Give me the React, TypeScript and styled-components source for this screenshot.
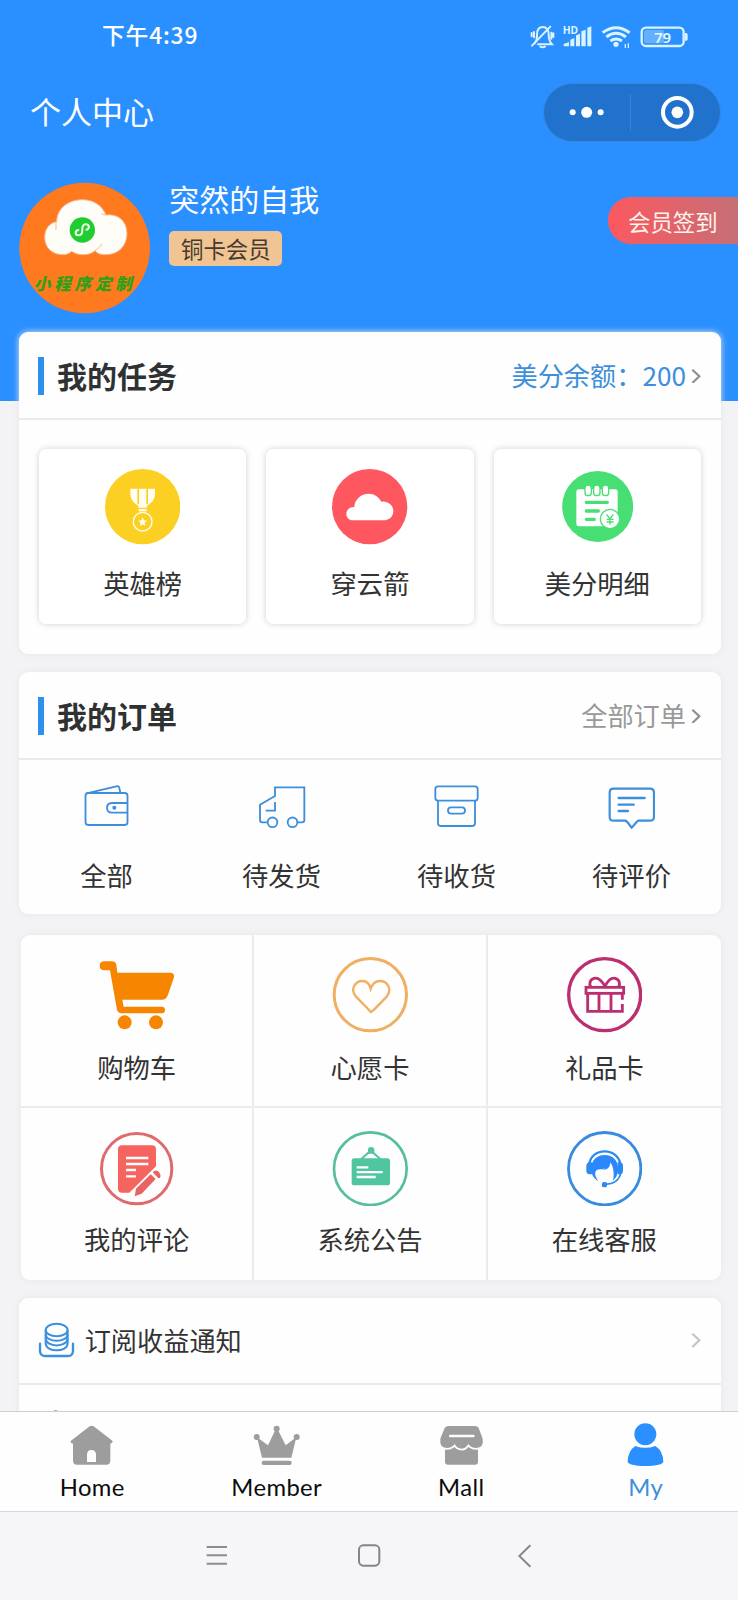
import React from "react";
import styled, { createGlobalStyle } from "styled-components";

const CJK = `"Noto Sans CJK SC", "Noto Sans", sans-serif`;

const GlobalStyle = createGlobalStyle`
  * { box-sizing: border-box; }
  body { margin: 0; background: #f3f3f5; font-family: ${CJK}; color: #333; }
`;

const Screen = styled.div`
  width: 738px;
  height: 1600px;
  display: flex;
  flex-direction: column;
  overflow: hidden;
  background: #f3f3f5;
`;

const Scroll = styled.main`
  height: 1411px;
  flex: none;
  overflow: hidden;
`;

const Header = styled.header`
  height: 401px;
  background: #2a8fff;
  color: #fff;
`;

const StatusBar = styled.div`
  height: 83px;
  padding: 24px 49px 0 102px;
  display: flex;
  justify-content: space-between;
  align-items: flex-start;
`;

const Clock = styled.span`
  margin-top: -1px;
  font-size: 22.8px;
  font-weight: 500;
  line-height: 24px;
  letter-spacing: 0.8px;
`;

const StatusIcons = styled.div`
  display: flex;
  align-items: center;
`;

const NavBar = styled.div`
  height: 58px;
  padding: 0 17px 0 30px;
  display: flex;
  justify-content: space-between;
  align-items: center;
`;

const PageTitle = styled.h1`
  margin: -3px 0 0;
  font-size: 31px;
  font-weight: 400;
  line-height: 40px;
`;

const Capsule = styled.div`
  width: 178px;
  height: 59px;
  border-radius: 30px;
  background: #2172cd;
  border: 1px solid #3b86d8;
  display: flex;
  align-items: center;
`;

const CapsuleHalf = styled.div`
  flex: 1;
  display: flex;
  justify-content: center;
  align-items: center;
  & + & {
    padding-left: 4px;
    border-left: 1px solid #3b84d6;
    height: 37px;
  }
`;

const Profile = styled.section`
  padding: 41px 0 0 19px;
  display: flex;
  align-items: flex-start;
`;

const Identity = styled.div`
  margin: -2px 0 0 19px;
  flex: 1;
  display: flex;
  flex-direction: column;
  align-items: flex-start;
`;

const Nickname = styled.div`
  font-size: 30px;
  line-height: 36px;
`;

const Level = styled.div`
  margin-top: 15px;
  width: 113px;
  height: 35px;
  border-radius: 5px;
  background: #f0c593;
  color: #453a30;
  font-size: 22.4px;
  line-height: 34px;
  text-align: center;
`;

const SignIn = styled.button`
  margin: 15px 0 0;
  padding: 0 0 0 20px;
  width: 130px;
  height: 47px;
  border: 0;
  border-radius: 23px 0 0 23px;
  background: linear-gradient(90deg, #fc585f, #c66f76);
  color: #fff3ec;
  font: 22.4px/46px ${CJK};
  text-align: left;
`;

const Cards = styled.div`
  margin-top: -69px;
  padding: 0 17px 0 19px;
`;

const Card = styled.section<{ $gap?: number; $inset?: number }>`
  margin-top: ${(p) => p.$gap ?? 0}px;
  margin-left: ${(p) => p.$inset ?? 0}px;
  border-radius: 9px;
  background: #fefefe;
  box-shadow: 0 0 6px #e6e5e8;
`;

const CardHead = styled.div`
  height: 88px;
  padding: 0 20px 0 19px;
  display: flex;
  align-items: center;
  border-bottom: 2px solid #ebe9eb;
`;

const Bar = styled.i`
  width: 6px;
  height: 38px;
  margin-top: 2px;
  background: #2f8fee;
`;

const CardTitle = styled.h2`
  margin: -1px auto 0 13px;
  font-size: 30px;
  font-weight: 700;
  line-height: 40px;
  color: #303133;
`;

const More = styled.span<{ $color: string }>`
  margin: 0 5px 0 0;
  font-size: 26.2px;
  line-height: 36px;
  color: ${(p) => p.$color};
`;

const Tiles = styled.div`
  height: 234px;
  padding: 29px 20px 0;
  display: grid;
  grid-template-columns: repeat(3, 1fr);
  gap: 20px;
`;

const Tile = styled.div`
  height: 175px;
  padding-top: 20px;
  border-radius: 7px;
  background: #fff;
  box-shadow: 0 0 6px #d2d2d4;
  display: flex;
  flex-direction: column;
  align-items: center;
`;

const IconSlot = styled.div<{ $h: number }>`
  height: ${(p) => p.$h}px;
  display: flex;
  align-items: center;
  justify-content: center;
`;

const Label = styled.div<{ $top: number }>`
  margin-top: ${(p) => p.$top}px;
  font-size: 26.3px;
  line-height: 36px;
  white-space: nowrap;
  color: #333;
`;

const Orders = styled.div`
  height: 154px;
  padding: 24px 2px 0 0;
  display: grid;
  grid-template-columns: repeat(4, 1fr);
`;

const Cell = styled.div`
  display: flex;
  flex-direction: column;
  align-items: center;
`;

const Services = styled.div`
  display: grid;
  grid-template-columns: repeat(3, 1fr);
`;

const Service = styled(Cell)<{ $first: boolean; $edge: boolean }>`
  height: ${(p) => (p.$first ? 173 : 172)}px;
  padding-top: ${(p) => (p.$first ? 22 : 22.5)}px;
  border-right: ${(p) => (p.$edge ? "0" : "2px solid #ececee")};
  border-bottom: ${(p) => (p.$first ? "2px solid #ececee" : "0")};
`;

const ListRow = styled.div`
  height: 87px;
  padding: 0 20px 2px 19px;
  display: flex;
  align-items: center;
  border-bottom: 2px solid #ececee;
`;

const RowLabel = styled.span`
  margin: 0 auto 0 10px;
  font-size: 26.2px;
  line-height: 36px;
`;

const RowPeek = styled.div`
  height: 60px;
  padding: 24px 0 0 31px;
`;

const TabBar = styled.nav`
  height: 101px;
  flex: none;
  display: grid;
  grid-template-columns: repeat(4, 1fr);
  background: #fefefe;
  border-top: 1px solid #cfcdd2;
  border-bottom: 1px solid #d9d7dc;
`;

const Tab = styled.div<{ $active?: boolean }>`
  padding-top: 10px;
  display: flex;
  flex-direction: column;
  align-items: center;
  font-family: Lato, "Open Sans", sans-serif;
  font-size: 23.8px;
  line-height: 30px;
  letter-spacing: 0.4px;
  color: ${(p) => (p.$active ? "#3d8edb" : "#0c0c0c")};
`;

const TabLabel = styled.span`
  margin-top: 5px;
`;

const SystemNav = styled.div`
  flex: 1;
  padding: 0 0 0 206px;
  display: flex;
  align-items: center;
  background: #f6f5f8;
`;

const NavGlyph = styled.div<{ $gap?: number }>`
  display: flex;
  margin-left: ${(p) => p.$gap ?? 0}px;
`;

type IconProps = {
  box: [number, number, number, number];
  children: React.ReactNode;
  gap?: number;
};

/* Artwork is drawn on a grid three times finer than the layout pixel. */
const Svg = styled.svg<{ $gap: number }>`
  display: block;
  flex: none;
  margin-left: ${(p) => p.$gap}px;
`;

const Icon = ({ box, children, gap = 0 }: IconProps) => (
  <Svg $gap={gap} width={box[2] / 3} height={box[3] / 3} viewBox={box.join(" ")} fill="none">
    {children}
  </Svg>
);

const Chevron = ({ color }: { color: string }) => (
  <Icon box={[968, 143, 30, 50]}>
    <path d="M972 151L993 171L972 191" stroke={color} strokeWidth="6.500" />
  </Icon>
);

const StatusGlyphs = () => (
  <StatusIcons>
    <Icon box={[482, 72, 76, 78]}>
      <g stroke="#d9f3ff" strokeWidth="6" strokeLinecap="round">
        <path d="M496 130C504 121 503 113 503 104C503 88 511 81 520 81C532 81 538 91 538 104C538 116 540 124 548 133H506" />
        <path d="M488 137L543 80" />
        <path d="M513 140q7 4 14 0M487 99v10M494 96v16M546 98v18M552 100v11" />
      </g>
    </Icon>
    <Icon box={[578, 72, 90, 78]} gap={6.3}>
      <g fill="#d9f3ff">
        <text x="580" y="101" fontSize="31" fontWeight="700" fontFamily="Noto Sans, sans-serif" textLength="46">HD</text>
        <path d="M583 132L599 126V139H583ZM603 119L615 114V139H603ZM620 106L632 101V139H620ZM636 94L649 89V139H636ZM654 83L666 79V139H654Z" />
      </g>
    </Icon>
    <Icon box={[696, 72, 92, 78]} gap={9.5}>
      <g stroke="#d9f3ff" strokeWidth="9">
        <path d="M701 98Q741 68 782 98M712 111Q741 88 771 111M724 123Q741 111 759 123" />
        <path d="M769 132v12M778 130v14" strokeWidth="4" />
      </g>
      <circle cx="741" cy="133" r="8" fill="#d9f3ff" />
    </Icon>
    <Icon box={[814, 72, 146, 78]} gap={8.7}>
      <rect x="826" y="90" width="60" height="40" rx="6" fill="#64b0ff" />
      <rect x="819" y="83" width="126" height="55" rx="13" stroke="#d9f3ff" strokeWidth="7" />
      <path d="M949 99h3q5 0 5 5v13q0 5-5 5h-3z" fill="#d9f3ff" />
      <text x="882" y="128" textAnchor="middle" fontSize="45" fontWeight="600" fontFamily="Noto Sans, sans-serif" textLength="51" fill="#e4f7ff">79</text>
    </Icon>
  </StatusIcons>
);

const Avatar = () => (
  <Icon box={[57, 546, 394, 396]}>
    <circle cx="254" cy="744" r="196" fill="#ff7a1e" />
    <path
      d="M185 764C150 762 134 738 134 712C134 685 150 668 170 665C170 625 205 599 247 599C285 599 308 620 318 645C352 640 381 662 381 700C381 738 355 764 318 764C302 765 292 760 285 752C270 768 232 768 215 754C208 761 198 765 185 764Z"
      fill="#fffdf8"
      stroke="#f7b287"
      strokeWidth="3"
    />
    <path d="M168 668V690M318 645L304 642M285 752Q300 742 306 732" stroke="#ef9a68" strokeWidth="2" />
    <circle cx="247" cy="690" r="38" fill="#1fcd30" />
    <path
      d="M235 690C223 693 225 706 236 706C245 706 247 699 247 691V686C247 677 252 672 259 673C269 675 269 686 259 689"
      stroke="#e9ffe6"
      strokeWidth="6"
      strokeLinecap="round"
    />
    <text
      x="101"
      y="869"
      fontSize="50"
      fontWeight="900"
      fontStyle="italic"
      fontFamily="Noto Sans CJK SC, sans-serif"
      textLength="294"
      fill="#2fa018"
    >
      小程序定制
    </text>
  </Icon>
);

const Medal = () => (
  <Icon box={[314, 446, 226, 226]}>
    <circle cx="427" cy="559" r="113" fill="#fbd023" />
    <path d="M390 505H464V522Q464 542 440 557V562H414V557Q390 542 390 522Z" fill="#fffdf2" />
    <path d="M413.500 505V552M440.500 505V552" stroke="#fbd023" strokeWidth="5" />
    <path d="M415 569.500H439" stroke="#fffdf2" strokeWidth="7" />
    <circle cx="427" cy="604" r="28" stroke="#fffdf2" strokeWidth="4" />
    <path d="M427 591l4 9 9 1-7 6 2 10-8-5-8 5 2-10-7-6 9-1z" fill="#fffdf2" />
  </Icon>
);

const Cloud = () => (
  <Icon box={[995, 446, 226, 226]}>
    <circle cx="1108" cy="559" r="113" fill="#ff575f" />
    <path
      d="M1058 600C1046 600 1038 591 1038 580C1038 569 1047 560 1062 560C1062 538 1082 520 1105 520C1122 520 1135 529 1143 544C1162 541 1179 554 1179 572C1179 588 1167 600 1150 600Z"
      fill="#fff"
    />
  </Icon>
);

const Bill = () => (
  <Icon box={[577, 453, 214, 214]}>
    <circle cx="684" cy="559.500" r="106.500" fill="#47df74" />
    <rect x="620" y="508" width="124" height="111" rx="7" fill="#fff" />
    {[656, 682, 708].map((x) => (
      <rect key={x} x={x - 10} y="495" width="19" height="32" rx="9" fill="#fff" stroke="#47df74" strokeWidth="4" />
    ))}
    <path d="M650 547H713M650 573H686M650 598H674" stroke="#47df74" strokeWidth="10" strokeLinecap="round" />
    <circle cx="721" cy="597" r="31" fill="#47df74" />
    <circle cx="721" cy="597" r="27" fill="#fff" />
    <path d="M711 583L721 597L731 583M721 597V614M711 598H732M711 606H732" stroke="#47df74" strokeWidth="4" />
  </Icon>
);

const LINE = "#3d8fdc";

const Wallet = () => (
  <Icon box={[252, 370, 136, 135]}>
    <g stroke={LINE} strokeWidth="5.500">
      <rect x="256.500" y="397" width="126" height="96" rx="8" />
      <path d="M260 398L349 377Q357 375 358 382L361 396M383 427H336Q321 428 321 441Q321 455 336 456H383" />
    </g>
    <circle cx="343" cy="441" r="6" fill={LINE} />
  </Icon>
);

const Truck = () => (
  <Icon box={[774, 370, 144, 135]}>
    <g stroke={LINE} strokeWidth="5.500">
      <path d="M802 485H787Q780 485 780 478V432L825 406V380H913V478Q913 485 906 485H893M825 424V450H797" />
      <circle cx="817.500" cy="485" r="14.500" />
      <circle cx="877.500" cy="485" r="14.500" />
    </g>
  </Icon>
);

const Parcel = () => (
  <Icon box={[194, 370, 138, 135]}>
    <g stroke={LINE} strokeWidth="5.500">
      <rect x="198" y="377" width="127" height="43" rx="8" />
      <path d="M206 420V488Q206 496 214 496H309Q317 496 317 488V420" />
      <rect x="236" y="440" width="51" height="19" rx="9.500" />
    </g>
  </Icon>
);

const Review = () => (
  <Icon box={[720, 370, 142, 135]}>
    <path
      d="M736 384H846Q858 384 858 396V468Q858 480 846 480H812Q808 481 806 484L791 501L778 484Q775 481 771 480H736Q725 480 725 468V396Q725 384 736 384Z"
      stroke={LINE}
      strokeWidth="6.500"
    />
    <path d="M752 412H830M752 432H797M752 451H780" stroke={LINE} strokeWidth="7" strokeLinecap="round" />
  </Icon>
);

const Cart = () => (
  <Icon box={[297, 109, 226, 226]}>
    <path
      d="M311 122H336Q346 122 349 132L352 156H511Q524 156 522 170L504 222Q499 237 486 237H367L371 258H486Q495 259 495 268Q495 278 486 278H364Q354 277 351 268L330 149H311Q299 147 299 136Q299 123 311 122Z"
      fill="#f68500"
    />
    <circle cx="374" cy="305" r="21" fill="#f68500" />
    <circle cx="468" cy="305" r="21" fill="#f68500" />
  </Icon>
);

const Wish = () => (
  <Icon box={[-110, 111, 228, 226]}>
    <circle cx="5" cy="224" r="108.500" stroke="#f0af62" strokeWidth="9" />
    <path
      d="M7 276Q2 272-2 267L-38 230C-57 208-40 183-19 183C-6 183 3 193 6 206C11 192 20 183 34 183C56 183 72 208 54 230L17 268Q12 273 7 276Z"
      stroke="#f0af62"
      strokeWidth="7"
    />
  </Icon>
);

const Gift = () => (
  <Icon box={[593, 111, 226, 226]}>
    <circle cx="706" cy="224" r="108" stroke="#bc2e70" strokeWidth="10" />
    <g stroke="#bc2e70" strokeWidth="8.500">
      <rect x="650" y="202" width="113" height="18" />
      <path d="M655 221V274H759V252M759 239V221M689 221V274M725 221V274" />
      <path d="M707 199C697 181 684 172 674 175C661 179 659 192 664 200M707 199C716 181 728 172 738 175C751 179 753 192 748 200" />
    </g>
  </Icon>
);

const Comment = () => (
  <Icon box={[297, 632, 226, 226]}>
    <circle cx="410" cy="745" r="105.500" stroke="#e0696f" strokeWidth="9" />
    <path d="M366 675H456Q468 675 468 687V738L388 817H366Q354 817 354 805V687Q354 675 366 675Z" fill="#f6645f" />
    <path d="M378 713H445M378 731H445M378 749H408M378 768H408" stroke="#fff" strokeWidth="7" />
    <path d="M404 828L408 805L452 762L467 776L425 820ZM458 756Q465 747 474 752Q485 762 480 773L475 774Z" fill="#ea6363" />
  </Icon>
);

const Notice = () => (
  <Icon box={[22, 32, 228, 226]}>
    <circle cx="137" cy="145" r="109" stroke="#57be9b" strokeWidth="8" />
    <rect x="81" y="114" width="115" height="81" rx="8" fill="#4fc69f" />
    <path d="M110 116L138 91L167 116" stroke="#4fc69f" strokeWidth="6" />
    <path d="M130 100V86Q131 80 139 80Q148 80 149 86V100Z" fill="#4fc69f" />
    <path d="M96 141H131M96 155.500H174M96 170H153" stroke="#fff" strokeWidth="7" />
  </Icon>
);

const Support = () => (
  <Icon box={[725, 32, 226, 226]}>
    <circle cx="838" cy="145" r="108.500" stroke="#388bde" strokeWidth="8.500" />
    <path d="M792 130C796 107 814 93 838 93C862 93 880 107 885 130" stroke="#2c8bf2" strokeWidth="7" />
    <path d="M792 126H800V162H792Q783 161 783 152V137Q783 128 792 126ZM885 126H877V162H885Q893 161 893 152V137Q893 128 885 126Z" fill="#2c8bf2" />
    <path
      d="M798 150C795 121 814 104 838 104C862 104 881 121 878 150C878 164 870 175 863 181C868 160 864 138 855 126C855 140 846 150 831 149C836 148 839 146 841 144C830 149 819 145 812 151C806 160 812 173 820 183C808 177 799 166 798 150Z"
      fill="#2b88fb"
    />
    <path d="M886 160C881 180 866 191 840 192" stroke="#2c8bf2" strokeWidth="5" />
    <rect x="830" y="185" width="15" height="16" rx="5" fill="#2c8bf2" />
  </Icon>
);

const Coins = () => (
  <Icon box={[54, 66, 110, 110]}>
    <g stroke={LINE} strokeWidth="6">
      <ellipse cx="110" cy="93" rx="33" ry="19" />
      <path d="M77 94V133C77 161 143 161 143 133V94" />
      <path d="M77 106C79 132 141 132 143 106M77 119C79 146 141 146 143 119" />
    </g>
    <path d="M60 134V156Q61 171 76 171H144Q158 171 159 156V134" stroke={LINE} strokeWidth="7" strokeLinecap="round" />
  </Icon>
);

const GREY = "#9d9d9d";

const HomeIcon = () => (
  <Icon box={[210, 426, 134, 135]}>
    <path
      d="M267 440Q275 434 283 440L337 482Q341 489 331 491V543Q330 554 320 554H230Q220 554 219 543V491Q208 490 213 482ZM261 546H288V523Q287 510 274 510Q262 510 261 523Z"
      fill={GREY}
      fillRule="evenodd"
    />
  </Icon>
);

const CrownIcon = () => (
  <Icon box={[760, 426, 142, 135]}>
    <g fill={GREY}>
      <circle cx="771" cy="471" r="9" />
      <circle cx="831" cy="446" r="9" />
      <circle cx="891" cy="471" r="9" />
      <path d="M772 472L805 496L827 450H835L858 496L890 472L875 533H787Z" />
      <rect x="786" y="542" width="90" height="13" rx="6" />
    </g>
  </Icon>
);

const MallIcon = () => (
  <Icon box={[207, 426, 140, 135]}>
    <path d="M228 500H327V545Q327 554 318 554H237Q228 554 228 545Z" fill={GREY} />
    <path
      d="M240 438H317Q326 438 329 444L341 476Q345 503 322 504Q306 504 298 492Q290 506 278 506Q264 506 257 492Q249 504 233 504Q211 503 214 476L227 444Q231 438 240 438Z"
      fill={GREY}
      stroke="#fefefe"
      strokeWidth="11"
      paintOrder="stroke"
    />
    <path d="M244 468H313" stroke="#fefefe" strokeWidth="8" strokeLinecap="round" />
  </Icon>
);

const MyIcon = () => (
  <Icon box={[776, 426, 110, 135]}>
    <circle cx="831" cy="463" r="33" fill="#2a8fff" />
    <path d="M801 498Q831 509 861 498Q884 512 885 545Q882 557 831 558Q781 557 778 545Q779 512 801 498Z" fill="#2a8fff" />
  </Icon>
);

const tasks = [
  { label: "英雄榜", icon: <Medal /> },
  { label: "穿云箭", icon: <Cloud /> },
  { label: "美分明细", icon: <Bill /> },
];

const orders = [
  { label: "全部", icon: <Wallet /> },
  { label: "待发货", icon: <Truck /> },
  { label: "待收货", icon: <Parcel /> },
  { label: "待评价", icon: <Review /> },
];

const services = [
  { label: "购物车", icon: <Cart /> },
  { label: "心愿卡", icon: <Wish /> },
  { label: "礼品卡", icon: <Gift /> },
  { label: "我的评论", icon: <Comment /> },
  { label: "系统公告", icon: <Notice /> },
  { label: "在线客服", icon: <Support /> },
];

const tabs = [
  { label: "Home", icon: <HomeIcon /> },
  { label: "Member", icon: <CrownIcon /> },
  { label: "Mall", icon: <MallIcon /> },
  { label: "My", icon: <MyIcon />, active: true },
];

export default function App() {
  return (
    <Screen lang="zh-CN">
      <GlobalStyle />
      <Scroll>
        <Header>
          <StatusBar>
            <Clock>下午4:39</Clock>
            <StatusGlyphs />
          </StatusBar>
          <NavBar>
            <PageTitle>个人中心</PageTitle>
            <Capsule>
              <CapsuleHalf>
                <Icon box={[604, 318, 106, 38]}>
                  <g fill="#fff">
                    <circle cx="615" cy="337" r="9" />
                    <circle cx="657" cy="337" r="16.500" />
                    <circle cx="699" cy="337" r="9" />
                  </g>
                </Icon>
              </CapsuleHalf>
              <CapsuleHalf>
                <Icon box={[878, 286, 104, 104]}>
                  <circle cx="930" cy="338" r="43" stroke="#fff" strokeWidth="12" />
                  <circle cx="930" cy="338" r="17.500" fill="#fff" />
                </Icon>
              </CapsuleHalf>
            </Capsule>
          </NavBar>
          <Profile>
            <Avatar />
            <Identity>
              <Nickname>突然的自我</Nickname>
              <Level>铜卡会员</Level>
            </Identity>
            <SignIn>会员签到</SignIn>
          </Profile>
        </Header>
        <Cards>
          <Card>
            <CardHead>
              <Bar />
              <CardTitle>我的任务</CardTitle>
              <More $color="#3d8fdc">美分余额：200</More>
              <Chevron color="#8f8f8f" />
            </CardHead>
            <Tiles>
              {tasks.map((t) => (
                <Tile key={t.label}>
                  <IconSlot $h={76}>{t.icon}</IconSlot>
                  <Label $top={20}>{t.label}</Label>
                </Tile>
              ))}
            </Tiles>
          </Card>
          <Card $gap={18}>
            <CardHead>
              <Bar />
              <CardTitle>我的订单</CardTitle>
              <More $color="#999">全部订单</More>
              <Chevron color="#8f8f8f" />
            </CardHead>
            <Orders>
              {orders.map((o) => (
                <Cell key={o.label}>
                  <IconSlot $h={45}>{o.icon}</IconSlot>
                  <Label $top={28}>{o.label}</Label>
                </Cell>
              ))}
            </Orders>
          </Card>
          <Card $gap={21} $inset={2}>
            <Services>
              {services.map((s, i) => (
                <Service key={s.label} $first={i < 3} $edge={i % 3 === 2}>
                  <IconSlot $h={76}>{s.icon}</IconSlot>
                  <Label $top={i < 3 ? 16 : 14.5}>{s.label}</Label>
                </Service>
              ))}
            </Services>
          </Card>
          <Card $gap={18}>
            <ListRow>
              <Coins />
              <RowLabel>订阅收益通知</RowLabel>
              <Chevron color="#c4c4c6" />
            </ListRow>
            <RowPeek>
              <Icon box={[154, 386, 36, 36]}>
                <circle cx="171" cy="406" r="16" fill="#5ba3b5" />
              </Icon>
            </RowPeek>
          </Card>
        </Cards>
      </Scroll>
      <TabBar>
        {tabs.map((t) => (
          <Tab key={t.label} $active={t.active}>
            <IconSlot $h={45}>{t.icon}</IconSlot>
            <TabLabel>{t.label}</TabLabel>
          </Tab>
        ))}
      </TabBar>
      <SystemNav>
        <NavGlyph>
          <Icon box={[618, 792, 66, 70]}>
            <path d="M620 801H681M620 826H681M620 851H681" stroke="#8d8d90" strokeWidth="6" />
          </Icon>
        </NavGlyph>
        <NavGlyph $gap={130}>
          <Icon box={[0, 0, 68, 70]}>
            <rect x="3" y="4" width="61" height="61" rx="13" stroke="#858588" strokeWidth="6" />
          </Icon>
        </NavGlyph>
        <NavGlyph $gap={137}>
          <Icon box={[447, 791, 42, 70]}>
            <path d="M484 795L451 827L484 859" stroke="#858588" strokeWidth="6" />
          </Icon>
        </NavGlyph>
      </SystemNav>
    </Screen>
  );
}
